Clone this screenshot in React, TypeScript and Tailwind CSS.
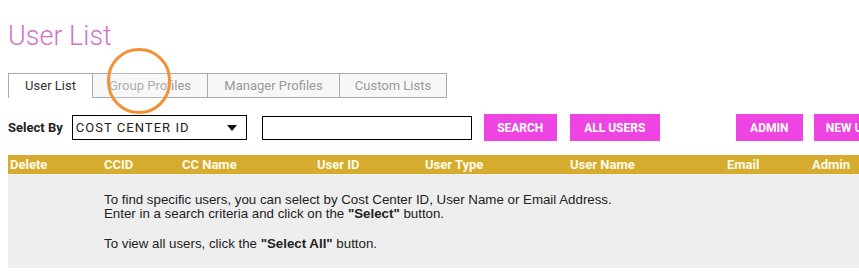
import React from 'react'

const tabs = ['User List', 'Group Profiles', 'Manager Profiles', 'Custom Lists']
const tabWidths = ['w-[84px]', 'w-[115px]', 'w-[132px]', 'w-[108px]']

const columns = [
  { label: 'Delete', w: 'w-[94px]' },
  { label: 'CCID', w: 'w-[78px]' },
  { label: 'CC Name', w: 'w-[135px]' },
  { label: 'User ID', w: 'w-[108px]' },
  { label: 'User Type', w: 'w-[145px]' },
  { label: 'User Name', w: 'w-[157px]' },
  { label: 'Email', w: 'w-[85px]' },
  { label: 'Admin', w: 'w-[90px]' },
]

export default function App() {
  return (
    <div className="relative w-[859px] h-[275px] overflow-hidden bg-white font-['Roboto',sans-serif]">
      <div className="w-[1000px] pl-2">
        {/* Title */}
        <h1 className="pt-[20px] text-[27px] leading-[33px] font-light text-[#d272cc]">User List</h1>

        {/* Tabs */}
        <div className="mt-[20px] flex h-[25px]">
          {tabs.map((t, i) => (
            <div
              key={t}
              className={`${tabWidths[i]} flex items-center justify-center border-t border-l border-[#a9a9a9] text-[13px] ${
                i === 0 ? 'bg-white text-[#333]' : 'bg-[#f7f7f7] border-b text-[#9a9a9a]'
              } ${i === tabs.length - 1 ? 'border-r' : ''}`}
            >
              {t}
            </div>
          ))}
        </div>

        {/* Search row */}
        <div className="mt-[16px] flex items-center h-[27px]">
          <span className="text-[13px] font-bold text-[#222] mr-[9px]">Select By</span>
          <div className="w-[175px] h-[25px] border border-black flex items-center justify-between pl-[3px] pr-[9px]">
            <span className="text-[13px] tracking-[0.08em] text-[#222]">COST CENTER ID</span>
            <svg width="10" height="6" viewBox="0 0 10 6"><path d="M0 0h10L5 6z" fill="#111" /></svg>
          </div>
          <div className="ml-[15px] w-[210px] h-[24px] border border-black" />
          <button className="ml-[12px] w-[73px] h-[27px] bg-[#ee44e2] text-white text-[12px] font-bold">SEARCH</button>
          <button className="ml-[13px] w-[90px] h-[27px] bg-[#ee44e2] text-white text-[12px] font-bold">ALL USERS</button>
          <button className="ml-[76px] w-[67px] h-[27px] bg-[#ee44e2] text-white text-[12px] font-bold">ADMIN</button>
          <button className="ml-[11px] w-[90px] h-[27px] bg-[#ee44e2] text-white text-[12px] font-bold text-left pl-[12px]">NEW USER</button>
        </div>

        {/* Table */}
        <div className="mt-[14px]">
          <div className="flex h-[19px] bg-[#d5ac2e] items-center">
            {columns.map((c) => (
              <div key={c.label} className={`${c.w} pl-[2px] text-[13px] font-bold text-[#fffbea]`}>
                {c.label}
              </div>
            ))}
          </div>
          <div className="h-[94px] bg-[#eeeeee] pl-[96px] pt-[19px] font-['Liberation_Sans',Arial,sans-serif] text-[13.3px] leading-[14px] text-[#222]">
            <p>To find specific users, you can select by Cost Center ID, User Name or Email Address.</p>
            <p>
              Enter in a search criteria and click on the <b>"Select"</b> button.
            </p>
            <p className="mt-[16px]">
              To view all users, click the <b>"Select All"</b> button.
            </p>
          </div>
        </div>
      </div>

      {/* Click highlight */}
      <div className="absolute left-[107px] top-[48px] w-[64px] h-[66px] rounded-full border-[3px] border-[#f39137] bg-white/20" />
    </div>
  )
}
